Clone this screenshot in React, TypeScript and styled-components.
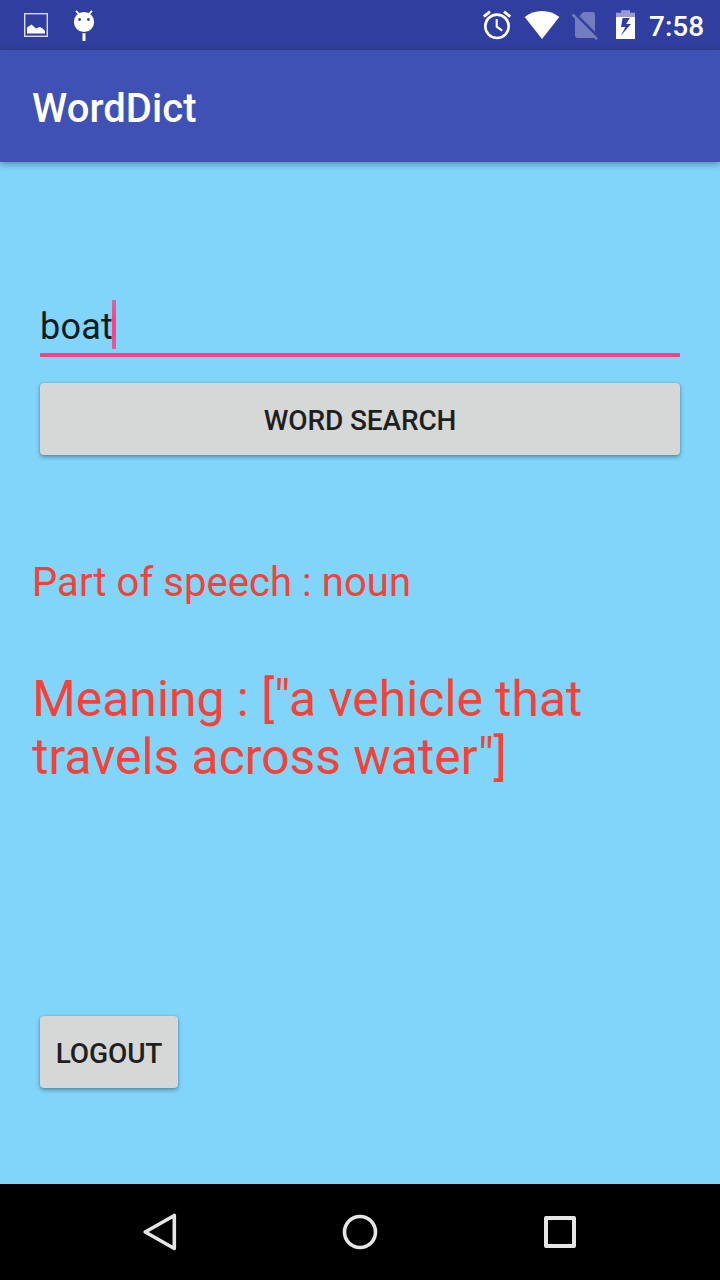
import React from "react";
import styled, { createGlobalStyle } from "styled-components";

const GlobalStyle = createGlobalStyle`
  * { box-sizing: border-box; }
  body { margin: 0; font-family: Roboto, "Liberation Sans", sans-serif; }
`;

const Screen = styled.div`
  width: 720px;
  height: 1280px;
  display: flex;
  flex-direction: column;
  background: #81d4fa;
  overflow: hidden;
`;

const StatusBar = styled.header`
  height: 50px;
  flex: none;
  display: flex;
  align-items: center;
  justify-content: space-between;
  background: #303f9f;
  padding-right: 16px;
`;

const StatusGroup = styled.div`
  display: flex;
  align-items: center;
  height: 50px;

  svg { display: block; }
`;

const Clock = styled.span`
  width: 55px;
  margin-left: 12px;
  font-size: 28px;
  line-height: 34px;
  font-weight: 500;
  color: #fff;
  white-space: nowrap;
  padding-top: 4px;
`;

const AppBar = styled.div`
  height: 112px;
  flex: none;
  display: flex;
  align-items: center;
  padding: 6px 32px 0;
  background: #3f51b5;
  box-shadow: 0 2px 7px rgba(0, 0, 0, 0.36);
`;

const Title = styled.h1`
  margin: 0;
  font-size: 40px;
  line-height: 48px;
  font-weight: 500;
  letter-spacing: 0.05px;
  color: #fff;
`;

const Content = styled.main`
  flex: 1;
  display: flex;
  flex-direction: column;
  align-items: flex-start;
  padding: 138px 32px 0;
`;

const Field = styled.div`
  width: 640px;
  height: 57px;
  margin: 0 8px 26px;
  display: flex;
  align-items: flex-start;
  border-bottom: 4px solid #ff4081;
`;

const FieldText = styled.span`
  width: 72px;
  font-size: 36px;
  line-height: 49px;
  letter-spacing: 0.2px;
  padding-top: 3px;
  color: #111c21;
`;

const Caret = styled.span`
  width: 4px;
  height: 49px;
  background: linear-gradient(#d8689f, #ff4081 40%, #ff4081 65%, #e0609a);
`;

const Button = styled.button<{ $width: number }>`
  width: ${(p) => p.$width}px;
  height: 72px;
  margin: 0 8px;
  padding: 4px 0 0;
  border: 0;
  border-radius: 4px;
  background: #d6d7d7;
  box-shadow: 0 2px 4px rgba(0, 0, 0, 0.34), 0 0 2px rgba(0, 0, 0, 0.14);
  font-family: inherit;
  font-size: 28px;
  line-height: 34px;
  letter-spacing: -0.12px;
  font-weight: 500;
  color: #1e1f1f;
`;

const Result = styled.p<{ $size: number; $line: number; $top: number; $spacing: number }>`
  margin: ${(p) => p.$top}px 0 0;
  font-size: ${(p) => p.$size}px;
  line-height: ${(p) => p.$line}px;
  letter-spacing: ${(p) => p.$spacing}px;
  color: #f44336;
`;

const Footer = styled.div`
  margin-top: auto;
  padding-bottom: 96px;
  display: flex;
`;

const NavBar = styled.nav`
  height: 96px;
  flex: none;
  display: flex;
  justify-content: center;
  background: #000;
`;

const NavButton = styled.button`
  width: 200px;
  height: 96px;
  padding: 0;
  border: 0;
  background: none;

  svg { display: block; }
`;

const NotificationIcons = () => (
  <svg width="110" height="50" viewBox="0 0 110 50">
    <rect x="24.7" y="13.7" width="22.6" height="22.6" fill="none" stroke="#fff" strokeOpacity="0.82" strokeWidth="1.4" />
    <path d="M27 33.4V27.6L29 26.2L31.4 24.4L33.5 26.2L36 28.4L38.3 27.6L40 27L42.3 28.3L45 31V33.4Z" fill="#fff" />
    <path d="M76 10.8L79.6 14.6M92 10.8L88.4 14.6" stroke="#fff" strokeWidth="1.8" />
    <path fillRule="evenodd" fill="#fff" d="M84 11.9a10.1 10.1 0 1 0 0 20.2a10.1 10.1 0 1 0 0-20.2ZM79.6 18.1a1.4 1.4 0 1 1 0 2.8a1.4 1.4 0 1 1 0-2.8ZM88.4 18.1a1.4 1.4 0 1 1 0 2.8a1.4 1.4 0 1 1 0-2.8Z" />
    <path d="M82.5 33.2h3V41h-3z" fill="#fff" />
  </svg>
);

const SystemIcons = () => (
  <svg width="157" height="50" viewBox="480 0 157 50">
    <circle cx="497" cy="26.3" r="11.7" fill="none" stroke="#fff" strokeWidth="2.6" />
    <path d="M496.7 19V26.7L502.2 30.6" fill="none" stroke="#fff" strokeWidth="2.1" />
    <path d="M483.8 16.6L490 11.6M510.2 16.6L504 11.6" stroke="#fff" strokeWidth="2.8" />
    <path d="M524.7 17C534 9 550 9 559.3 17L542 39Z" fill="#fff" />
    <g fill="#fff" fillOpacity="0.32">
      <path d="M579.4 16.2L583.4 12H592.6Q595 12 595 14.4V31.8Z" />
      <path d="M573.4 13.6L571.6 15.4L575 18.8V35.6Q575 38 577.4 38H594.2L596.2 40L598 38.2Z" />
    </g>
    <path d="M616 17V12.8H621.2V10.2H630V12.8H635V17Z" fill="#fff" fillOpacity="0.5" />
    <path fillRule="evenodd" fill="#fff" d="M616 17H635V39H616ZM622.6 18L621 27H625.4L620.8 35.7L631 24H626.2L629.8 18Z" />
  </svg>
);

const NavIcon = ({ children }: { children: React.ReactNode }) => (
  <svg width="200" height="96" viewBox="0 0 200 96" fill="none" stroke="#e6e6e6" strokeLinejoin="round">
    {children}
  </svg>
);

export default function App() {
  return (
    <>
      <GlobalStyle />
      <Screen>
        <StatusBar>
          <StatusGroup>
            <NotificationIcons />
          </StatusGroup>
          <StatusGroup>
            <SystemIcons />
            <Clock>7:58</Clock>
          </StatusGroup>
        </StatusBar>
        <AppBar>
          <Title>WordDict</Title>
        </AppBar>
        <Content>
          <Field>
            <FieldText>boat</FieldText>
            <Caret />
          </Field>
          <Button $width={640}>WORD SEARCH</Button>
          <Result $size={40} $line={48} $top={104} $spacing={0.05}>Part of speech : noun</Result>
          <Result $size={50} $line={58} $top={63} $spacing={-0.08}>
            Meaning : ["a vehicle that
            <br />
            travels across water"]
          </Result>
          <Footer>
            <Button $width={138}>LOGOUT</Button>
          </Footer>
        </Content>
        <NavBar>
          <NavButton aria-label="Back">
            <NavIcon>
              <path d="M85.2 48L114.3 31.5V64.5Z" strokeWidth="3.6" />
            </NavIcon>
          </NavButton>
          <NavButton aria-label="Home">
            <NavIcon>
              <circle cx="100" cy="48" r="15.5" strokeWidth="3.6" />
            </NavIcon>
          </NavButton>
          <NavButton aria-label="Overview">
            <NavIcon>
              <rect x="86" y="34" width="28" height="28" strokeWidth="4" />
            </NavIcon>
          </NavButton>
        </NavBar>
      </Screen>
    </>
  );
}
